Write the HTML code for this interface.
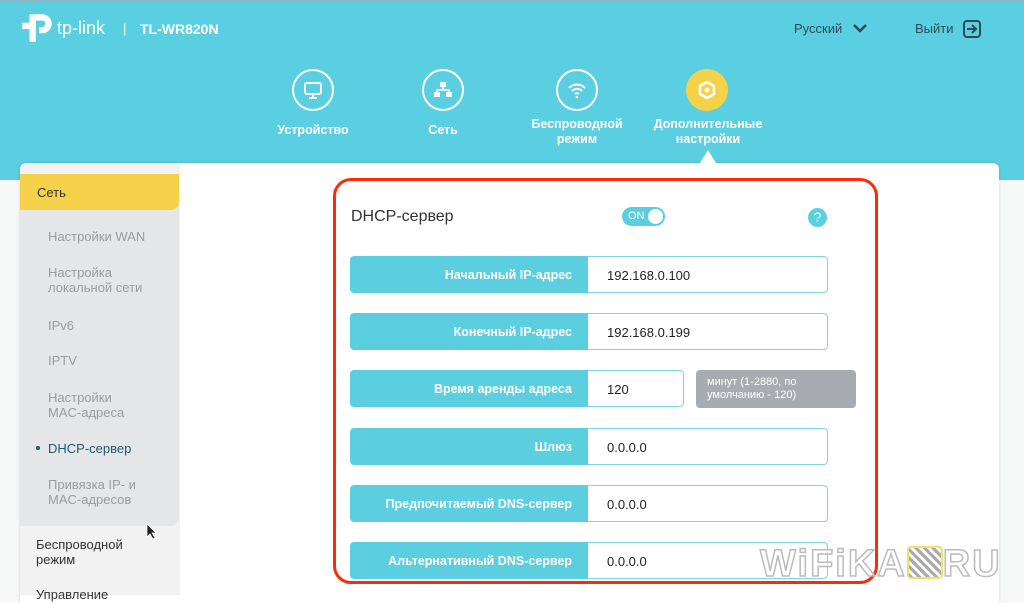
<!DOCTYPE html>
<html><head><meta charset="utf-8"><style>
*{margin:0;padding:0;box-sizing:border-box}
body{width:1024px;height:595px;overflow:hidden;font-family:"Liberation Sans",sans-serif;background:#f7f8f8;position:relative}
.hdr{position:absolute;left:0;top:0;width:1024px;height:180px;background:#5acfe1;border-top:2px solid #8fb8c2}
.abs{position:absolute}
.panel{position:absolute;left:20px;top:163px;width:979px;height:440px;background:#fff;border-radius:6px 6px 0 0;box-shadow:0 0 3px rgba(0,0,0,.15)}
.side{position:absolute;left:20px;top:163px;width:160px;height:432px;background:#f2f2f3;border-radius:6px 0 0 0}
.sub{position:absolute;left:20px;top:200px;width:159px;height:326px;background:#e5e6e8;border-radius:0 0 8px 0}
.act{position:absolute;left:20px;top:174px;width:159px;height:36px;background:#f6d24b;border-radius:0 0 8px 0;font-size:13px;color:#333;padding:11px 0 0 17px}
.si{position:absolute;left:48px;font-size:13px;color:#9a9c9f;line-height:15px}
.nl{position:absolute;color:#fff;font-size:12.5px;font-weight:bold;text-align:center;line-height:15px;width:140px}
.circ{position:absolute;width:42px;height:42px;border:2px solid #fff;border-radius:50%}
.lab{position:absolute;left:350px;width:240px;height:37px;background:#5bcfe0;border-radius:4px 0 0 4px;color:#fff;font-size:12.5px;font-weight:bold;text-align:right;padding:12px 18px 0 0}
.inp{position:absolute;left:588px;width:240px;height:37px;border:1.5px solid #7fd6e3;border-left:none;border-radius:0 4px 4px 0;background:#fff;font-size:13px;color:#222;padding:11px 0 0 19px}
</style></head><body>
<div class="hdr"></div>
<div class="panel"></div>
<!-- logo -->
<svg class="abs" style="left:20px;top:10px" width="36" height="36" viewBox="0 0 34 34"><path d="M9 4 h12 a9 9 0 0 1 0 18 h-3 v-6 h3 a3 3 0 0 0 0-6 h-6 v20 h-6 z" fill="#fff"/><rect x="2" y="12" width="7" height="6" fill="#fff"/></svg>
<div class="abs" style="left:57px;top:18px;color:#fff;font-size:18px">tp-link</div>
<div class="abs" style="left:123px;top:21px;color:#fff;font-size:13px">|</div>
<div class="abs" style="left:140px;top:21px;color:#fff;font-size:14px;font-weight:bold">TL-WR820N</div>
<div class="abs" style="left:794px;top:21px;color:#2f4a55;font-size:13px">Русский</div>
<svg class="abs" style="left:852px;top:22px" width="16" height="12"><path d="M2 3 L8 9 L14 3" stroke="#2f4a55" stroke-width="2.5" fill="none"/></svg>
<div class="abs" style="left:915px;top:21px;color:#2f4a55;font-size:13px">Выйти</div>
<svg class="abs" style="left:962px;top:19px" width="20" height="20"><rect x="2" y="2" width="16" height="16" rx="3" stroke="#2f4a55" stroke-width="2" fill="none"/><path d="M5 10 H14 M10 6 L14 10 L10 14" stroke="#2f4a55" stroke-width="2" fill="none"/></svg>
<!-- nav -->
<div class="circ" style="left:292px;top:69px"></div>
<svg class="abs" style="left:302px;top:79px" width="22" height="22"><rect x="3" y="4" width="16" height="11" rx="2" stroke="#fff" stroke-width="2" fill="none"/><path d="M11 15 V19 M7 19 H15" stroke="#fff" stroke-width="2"/></svg>
<div class="circ" style="left:422px;top:69px"></div>
<svg class="abs" style="left:432px;top:79px" width="22" height="22"><rect x="8" y="3" width="6" height="5" fill="#fff"/><rect x="2" y="13" width="6" height="5" fill="#fff"/><rect x="14" y="13" width="6" height="5" fill="#fff"/><path d="M11 8 V11 M5 13 V11 H17 V13" stroke="#fff" stroke-width="1.5" fill="none"/></svg>
<div class="circ" style="left:556px;top:69px"></div>
<svg class="abs" style="left:566px;top:79px" width="22" height="22"><path d="M3 9 A11 11 0 0 1 19 9 M6 12 A7 7 0 0 1 16 12 M9 15 A3 3 0 0 1 13 15" stroke="#fff" stroke-width="2" fill="none"/><circle cx="11" cy="18" r="1.3" fill="#fff"/></svg>
<div class="abs" style="left:686px;top:69px;width:42px;height:42px;border-radius:50%;background:#f6d24b"></div>
<svg class="abs" style="left:696px;top:79px" width="22" height="22"><polygon points="11,3 18,7 18,15 11,19 4,15 4,7" stroke="#fff" stroke-width="2.5" fill="none"/><circle cx="11" cy="11" r="2.5" fill="#fff"/></svg>
<div class="nl" style="left:243px;top:123px">Устройство</div>
<div class="nl" style="left:373px;top:123px">Сеть</div>
<div class="nl" style="left:507px;top:117px">Беспроводной<br>режим</div>
<div class="nl" style="left:638px;top:117px">Дополнительные<br>настройки</div>
<div class="abs" style="left:700px;top:150px;width:0;height:0;border-left:8px solid transparent;border-right:8px solid transparent;border-bottom:13px solid #fff"></div>
<!-- sidebar -->
<div class="side"></div>
<div class="sub"></div>
<div class="act">Сеть</div>
<div class="si" style="top:229px">Настройки WAN</div>
<div class="si" style="top:265px">Настройка<br>локальной сети</div>
<div class="si" style="top:318px">IPv6</div>
<div class="si" style="top:353px">IPTV</div>
<div class="si" style="top:390px">Настройки<br>MAC-адреса</div>
<div class="abs" style="left:36px;top:446px;width:4px;height:4px;border-radius:50%;background:#1f5a6c"></div>
<div class="si" style="top:441px;color:#1f5a6c">DHCP-сервер</div>
<div class="si" style="top:477px">Привязка IP- и<br>MAC-адресов</div>
<div class="abs" style="left:36px;top:537px;font-size:13px;color:#333;line-height:15px">Беспроводной<br>режим</div>
<div class="abs" style="left:36px;top:587px;font-size:13px;color:#333">Управление</div>
<svg class="abs" style="left:146px;top:523px" width="12" height="17"><path d="M1 1 V14 L4 11 L7 16 L9 15 L6 10 H10 Z" fill="#222" stroke="#fff" stroke-width=".7"/></svg>
<!-- content -->
<div class="abs" style="left:333px;top:178px;width:545px;height:406px;border:3.5px solid #fa2b0a;border-radius:18px"></div>
<div class="abs" style="left:351px;top:208px;font-size:16px;color:#333">DHCP-сервер</div>
<div class="abs" style="left:622px;top:207px;width:43px;height:19px;border-radius:10px;background:#5bcfe0"></div>
<div class="abs" style="left:628px;top:210px;font-size:11px;color:#fff">ON</div>
<div class="abs" style="left:648px;top:209px;width:15px;height:15px;border-radius:50%;background:#fff"></div>
<div class="abs" style="left:808px;top:208px;width:19px;height:19px;border-radius:50%;background:#5bcfe0;color:#fff;font-size:14px;text-align:center;line-height:19px">?</div>
<div class="lab" style="top:256px">Начальный IP-адрес</div><div class="inp" style="top:256px">192.168.0.100</div>
<div class="lab" style="top:313px">Конечный IP-адрес</div><div class="inp" style="top:313px">192.168.0.199</div>
<div class="lab" style="top:370px">Время аренды адреса</div><div class="inp" style="top:370px;width:96px">120</div>
<div class="abs" style="left:696px;top:370px;width:160px;height:38px;background:#a8abaf;border-radius:4px;color:#fff;font-size:11px;line-height:13px;padding:6px 0 0 11px">минут (1-2880, по<br>умолчанию - 120)</div>
<div class="lab" style="top:428px">Шлюз</div><div class="inp" style="top:428px">0.0.0.0</div>
<div class="lab" style="top:485px">Предпочитаемый DNS-сервер</div><div class="inp" style="top:485px">0.0.0.0</div>
<div class="lab" style="top:542px">Альтернативный DNS-сервер</div><div class="inp" style="top:542px">0.0.0.0</div>
<div class="abs" style="left:760px;top:543px;font-size:38px;font-weight:bold;color:rgba(255,255,255,.6);-webkit-text-stroke:1.5px #bbb;letter-spacing:2px">WiFiKA<span style="display:inline-block;width:36px;height:33px;border:2px solid #f1df6a;border-radius:4px;vertical-align:-3px;background:repeating-linear-gradient(45deg,#aaa 0 3px,#fff 3px 6px)"></span>RU</div>
</body></html>
